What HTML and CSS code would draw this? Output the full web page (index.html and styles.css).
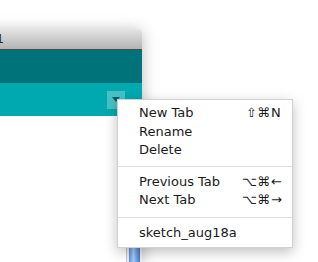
FILE: index.html
```html
<!DOCTYPE html>
<html lang="en">
<head>
  <meta charset="UTF-8">
  <title>Tab menu</title>
  <link rel="stylesheet" href="styles.css">
</head>
<body>
  <div class="window">
    <div class="titlebar"><span class="title">sketch_aug18a | Arduino 1.8.1</span></div>
    <div class="toolbar"></div>
    <div class="tabs">
      <div class="tab-menu-btn"><span class="caret"></span></div>
    </div>
    <div class="content">
      <div class="editor"></div>
      <div class="scrollbar"><div class="thumb"></div></div>
    </div>
  </div>

  <div class="menu">
    <div class="item"><span>New Tab</span><span class="keys"><span class="mods">⇧⌘</span><span class="key">N</span></span></div>
    <div class="item"><span>Rename</span></div>
    <div class="item"><span>Delete</span></div>
    <div class="sep"></div>
    <div class="item"><span>Previous Tab</span><span class="keys"><span class="mods">⌥⌘</span><span class="key">←</span></span></div>
    <div class="item"><span>Next Tab</span><span class="keys"><span class="mods">⌥⌘</span><span class="key">→</span></span></div>
    <div class="sep sep-low"></div>
    <div class="item"><span>sketch_aug18a</span></div>
  </div>
</body>
</html>
```

FILE: styles.css
```css
:root {
  --teal-dark: #00737a;
  --teal: #00a9b0;
}
body { margin:0; width:318px; height:262px; overflow:hidden; background:#fff; position:relative;
  font-family:"DejaVu Sans", sans-serif; font-size:13px; }

/* window sits on the desktop, only its right end shows */
.window { position:absolute; left:-300px; top:29px; width:442px; height:233px; display:flex; flex-direction:column;
  border-radius:4px 4px 0 0; box-shadow:0 2px 16px rgba(0,0,0,0.28); background:#fff; }
.titlebar { height:20px; flex:none; border-bottom:1px solid #4a4a4a; border-radius:4px 4px 0 0;
  background:linear-gradient(#e4e4e4, #b4b4b4); display:grid; grid-template-columns:304px 1fr; }
.title { grid-column:1; justify-self:end; line-height:20px; font-size:13px; color:#2a2a2a; white-space:nowrap; }
.toolbar { height:33px; flex:none; background:var(--teal-dark); }
.tabs { height:33px; flex:none; background:var(--teal); display:flex; justify-content:flex-end; align-items:flex-start;
  padding-right:17px; }
.tab-menu-btn { width:18px; height:18px; margin-top:8px; background:rgba(255,255,255,0.28);
  display:flex; justify-content:center; padding-top:6px; box-sizing:border-box; }
.caret { width:0; height:0; border-left:4.5px solid transparent; border-right:4.5px solid transparent;
  border-top:5px solid #005f64; }
.content { flex:1; display:flex; }
.editor { flex:1; }
.scrollbar { width:15px; border-left:1px solid #c8c8c8; background:#ededed; display:flex; justify-content:center; }
.thumb { width:11px; margin-top:100px; border-radius:5px 5px 0 0;
  background:linear-gradient(to right, #5f8fd8, #a8cdf5 40%, #7fb0ec 60%, #4677c9); }

/* popup menu */
.menu { position:absolute; left:117px; top:99px; width:176px; box-sizing:border-box; padding:4px 11px 5px 21px;
  background:#fff; border:1px solid rgba(0,0,0,0.18); box-shadow:0 4px 12px rgba(0,0,0,0.25); color:#1a1a1a; }
.item { display:flex; justify-content:space-between; line-height:18px; height:18px; white-space:nowrap; }
.item:nth-child(2) { margin-top:0.5px; }
.keys { display:flex; }
.mods { text-align:right; }
.key { width:10px; margin-left:1px; }
.sep { height:1px; background:#dedede; margin:7px -11px 6px -21px; }
.sep-low { margin:8px -11px 6px -21px; }
```
